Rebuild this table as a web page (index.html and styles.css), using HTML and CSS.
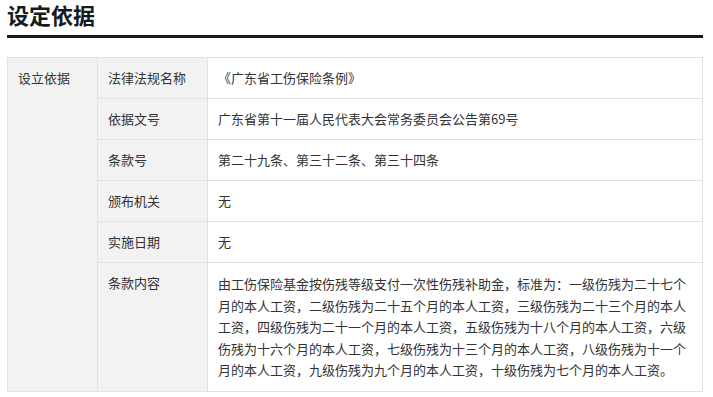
FILE: index.html
```html
<!DOCTYPE html>
<html lang="zh-CN">
<head>
<meta charset="utf-8">
<title>设定依据</title>
<link rel="stylesheet" href="styles.css">
</head>
<body>
<div class="page">
  <h2 class="title">设定依据</h2>
  <table class="basis">
    <tr>
      <td class="group" rowspan="6">设立依据</td>
      <td class="label">法律法规名称</td>
      <td class="value">《广东省工伤保险条例》</td>
    </tr>
    <tr>
      <td class="label">依据文号</td>
      <td class="value">广东省第十一届人民代表大会常务委员会公告第69号</td>
    </tr>
    <tr>
      <td class="label">条款号</td>
      <td class="value">第二十九条、第三十二条、第三十四条</td>
    </tr>
    <tr>
      <td class="label">颁布机关</td>
      <td class="value">无</td>
    </tr>
    <tr>
      <td class="label">实施日期</td>
      <td class="value">无</td>
    </tr>
    <tr>
      <td class="label">条款内容</td>
      <td class="value long">由工伤保险基金按伤残等级支付一次性伤残补助金，标准为：一级伤残为二十七个月的本人工资，二级伤残为二十五个月的本人工资，三级伤残为二十三个月的本人工资，四级伤残为二十一个月的本人工资，五级伤残为十八个月的本人工资，六级伤残为十六个月的本人工资，七级伤残为十三个月的本人工资，八级伤残为十一个月的本人工资，九级伤残为九个月的本人工资，十级伤残为七个月的本人工资。</td>
    </tr>
  </table>
</div>
</body>
</html>
```
FILE: styles.css
```css
html, body {
  margin: 0;
  padding: 0;
  background: #ffffff;
}
body {
  font-family: "Microsoft YaHei", "Noto Sans CJK SC", "Liberation Sans", sans-serif;
  color: #333333;
}
.page {
  padding: 0 10px 0 7px;
}
.title {
  margin: 0;
  padding-top: 0;
  height: 35px;
  line-height: 28px;
  font-size: 22px;
  font-weight: bold;
  color: #151b22;
  border-bottom: 3px solid #141a21;
  box-sizing: content-box;
}
.basis {
  margin-top: 19px;
  width: 696px;
  border-collapse: collapse;
  table-layout: fixed;
  font-size: 13px;
}
.basis td {
  border: 1px solid #e2e2e2;
  padding: 10px 10px;
  line-height: 20px;
  vertical-align: top;
  text-align: left;
}
.group {
  width: 69px;
  background: #f2f2f2;
}
.label {
  width: 89px;
  background: #f2f2f2;
}
.value {
  background: #ffffff;
}
.value.long {
  line-height: 21.6px;
  padding-right: 12px;
}
```
